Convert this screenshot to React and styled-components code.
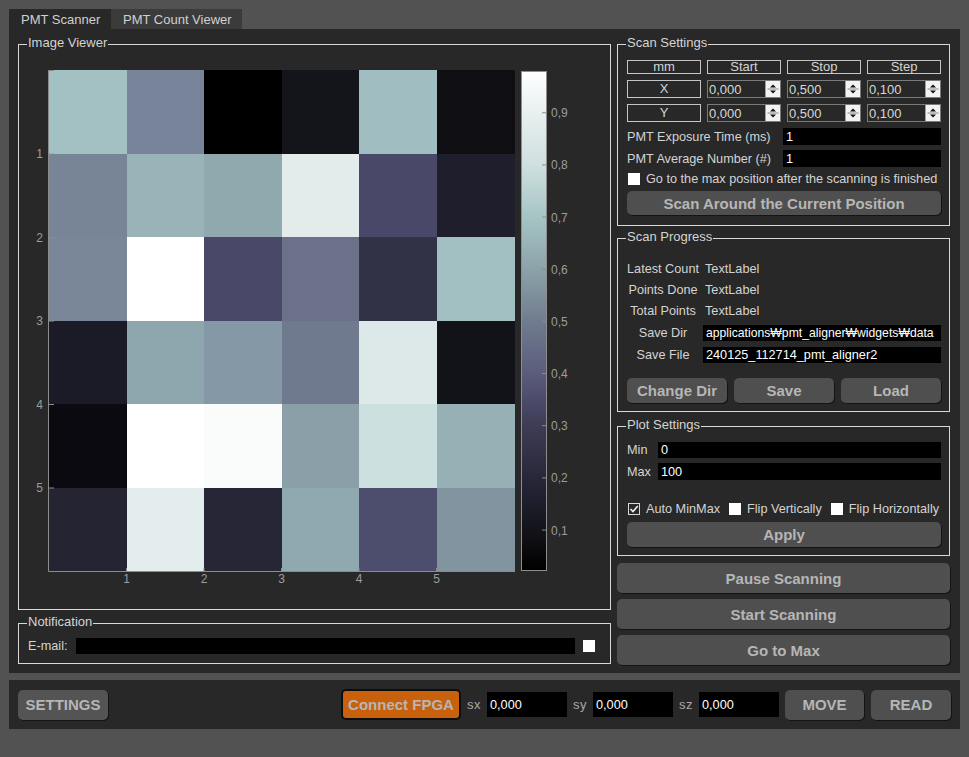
import React from 'react';
import styled, { createGlobalStyle } from 'styled-components';

const GlobalStyle = createGlobalStyle`
  html, body { margin: 0; padding: 0; background: #525252; }
  body { font-family: "Liberation Sans", Arial, sans-serif; font-size: 12.7px; color: #d4d4d4; }
  * { box-sizing: border-box; }
`;

const Window = styled.div`
  width: 969px;
  height: 757px;
  padding: 9px 0 0 9px;
  display: flex;
  flex-direction: column;
`;

const TabBar = styled.div`
  display: flex;
  height: 20px;
`;

const Tab = styled.div`
  width: ${p => p.$w}px;
  height: 20px;
  padding-left: 12px;
  display: flex;
  align-items: center;
  background: ${p => (p.$active ? '#282828' : '#3b3b3b')};
  color: #d0d0d0;
  font-size: 13px;
`;

const MainPanel = styled.div`
  width: 951px;
  height: 644px;
  background: #282828;
  padding: 15px 10px 0 9px;
  display: flex;
  gap: 6px;
`;

const Column = styled.div`
  width: ${p => p.$w}px;
  display: flex;
  flex-direction: column;
`;

const Group = styled.div`
  position: relative;
  border: 1px solid #d8d8d8;
  height: ${p => p.$h}px;
  margin-top: ${p => p.$mt || 0}px;
  padding: ${p => p.$pad || '0'};
  display: flex;
  flex-direction: column;
  flex: none;
`;

const GroupTitle = styled.span`
  position: absolute;
  top: -9px;
  left: 8px;
  padding: 0 1px;
  background: #282828;
  font-size: 13px;
  line-height: 13px;
  color: #d4d4d4;
  white-space: nowrap;
`;

const PlotSvg = styled.svg`
  display: block;
  font-family: "Liberation Sans", Arial, sans-serif;
`;

const SettingsGrid = styled.div`
  display: grid;
  grid-template-columns: repeat(4, 74px);
  grid-template-rows: 14px 18px 18px;
  column-gap: 6px;
  row-gap: 6px;
`;

const HeaderCell = styled.div`
  border: 1px solid #c4c4c4;
  display: flex;
  align-items: center;
  justify-content: center;
  font-size: 13px;
  line-height: 12px;
  color: #d4d4d4;
`;

const SpinBox = styled.div`
  border: 1px solid #7a7a7a;
  display: flex;
  align-items: center;
  justify-content: space-between;
  padding-left: 1px;
  color: #d8d8d8;
  font-size: 13px;
`;

const SpinButtons = styled.div`
  width: 15px;
  height: 16px;
  background: #f2f2f2;
  border-left: 1px solid #a0a0a0;
  display: flex;
`;

const FormRow = styled.div`
  display: flex;
  align-items: center;
  flex: none;
  height: ${p => p.$h || 17}px;
  margin-top: ${p => p.$mt || 0}px;
  gap: ${p => p.$gap || 0}px;
`;

const RowLabel = styled.span`
  width: ${p => (p.$w ? `${p.$w}px` : 'auto')};
  flex: ${p => (p.$w ? 'none' : '1')};
  text-align: ${p => (p.$center ? 'center' : 'left')};
  white-space: nowrap;
  color: #d4d4d4;
`;

const DarkInput = styled.div`
  width: ${p => (p.$w ? `${p.$w}px` : 'auto')};
  flex: ${p => (p.$w ? 'none' : '1')};
  height: ${p => p.$h || 16}px;
  background: #000;
  color: #fff;
  padding-left: 3px;
  display: flex;
  align-items: center;
  font-size: ${p => p.$fs || 12.7}px;
  white-space: nowrap;
  overflow: hidden;
`;

const ValueText = styled.span`
  padding-left: 2px;
  color: #d4d4d4;
`;

const CheckRow = styled.div`
  display: flex;
  align-items: center;
  flex: none;
  height: 14px;
  margin-top: ${p => p.$mt || 0}px;
  gap: 9px;
  padding-left: 1px;
`;

const CheckItem = styled.label`
  display: flex;
  align-items: center;
  gap: 6px;
  white-space: nowrap;
  color: #d4d4d4;
`;

const Box = styled.span`
  width: 12px;
  height: 12px;
  flex: none;
  background: ${p => (p.$checked ? '#282828' : '#ffffff')};
  border: ${p => (p.$checked ? '1px solid #d8d8d8' : 'none')};
  display: flex;
  align-items: center;
  justify-content: center;
`;

const Button = styled.div`
  height: ${p => p.$h || 25}px;
  width: ${p => (p.$w ? `${p.$w}px` : 'auto')};
  flex: ${p => (p.$grow ? '1' : 'none')};
  margin-top: ${p => p.$mt || 0}px;
  background: ${p => (p.$orange ? '#c8600c' : p.$light ? '#545454' : '#4f4f4f')};
  border: ${p => (p.$orange ? '2px solid #0c0c0c' : 'none')};
  border-radius: 5px;
  box-shadow: ${p => (p.$orange ? 'none' : '1px 1px 0 #141414')};
  color: #b6b6b6;
  font-weight: bold;
  font-size: 15px;
  display: flex;
  align-items: center;
  justify-content: center;
  white-space: nowrap;
`;

const ButtonRow = styled.div`
  display: flex;
  flex: none;
  gap: 7px;
  margin-top: ${p => p.$mt || 0}px;
`;

const BottomBar = styled.div`
  width: 951px;
  height: 49px;
  margin-top: 7px;
  background: #282828;
  padding: 0 9px 0 9px;
  display: flex;
  align-items: center;
  gap: 6px;
`;

const Spacer = styled.div`
  flex: 1;
`;

const CoordLabel = styled.span`
  width: 14px;
  color: #a8a8a8;
  font-size: 13px;
  letter-spacing: 0.5px;
`;

const CELLS = [
  ['#a3c1c3', '#77849a', '#000000', '#14151b', '#a0bec1', '#0e0e13'],
  ['#778597', '#9ab3b8', '#8fa9af', '#e3ebeb', '#4a4868', '#1f1e2c'],
  ['#7a8798', '#ffffff', '#4a4868', '#6b7189', '#323247', '#a2c0c1'],
  ['#1b1b27', '#8ea6ae', '#8499a5', '#6f7a8f', '#dde9e9', '#121318'],
  ['#0a0a10', '#ffffff', '#fafcfc', '#8a9fa8', '#cde0e0', '#97b0b5'],
  ['#242433', '#e4edee', '#262636', '#90a9b0', '#4d4d6d', '#8294a0'],
];

const STOPS = [
  [0, '#ffffff'],
  [0.084, '#e8efef'],
  [0.188, '#cfdfdf'],
  [0.293, '#a6c4c4'],
  [0.397, '#8ba2a9'],
  [0.502, '#707b8e'],
  [0.606, '#5b5c7b'],
  [0.66, '#4b4a6a'],
  [0.711, '#3d3c54'],
  [0.815, '#28273a'],
  [0.92, '#131319'],
  [1, '#000000'],
];

const PX = 30;
const PY = 25;
const CW = 77.5;
const RH = 83.5;
const AXIS = '#8c8c8c';
const LABEL = '#9c9c9c';

function Heatmap() {
  const right = PX + CW * 6;
  const bottom = PY + RH * 6;
  return (
    <PlotSvg width="591" height="564" viewBox="0 0 591 564">
      <defs>
        <linearGradient id="cbar" x1="0" y1="0" x2="0" y2="1">
          {STOPS.map(([o, c]) => (
            <stop key={o} offset={o} stopColor={c} />
          ))}
        </linearGradient>
      </defs>
      {CELLS.map((row, r) =>
        row.map((c, i) => (
          <rect
            key={`${r}-${i}`}
            x={PX + i * CW}
            y={PY + r * RH}
            width={CW + 0.6}
            height={RH + 0.6}
            fill={c}
            shapeRendering="crispEdges"
          />
        ))
      )}
      <line x1={PX - 0.5} y1={PY} x2={PX - 0.5} y2={bottom + 0.5} stroke={AXIS} strokeWidth="1" />
      <line x1={PX - 0.5} y1={bottom + 0.5} x2={right + 0.5} y2={bottom + 0.5} stroke={AXIS} strokeWidth="1" />
      {[0, 1, 2, 3, 4, 5].map(k => (
        <line key={`yt${k}`} x1={PX} y1={PY + k * RH + 0.5} x2={PX + 5} y2={PY + k * RH + 0.5} stroke={AXIS} />
      ))}
      {[1, 2, 3, 4, 5, 6].map(k => (
        <line key={`xt${k}`} x1={PX + k * CW} y1={bottom} x2={PX + k * CW} y2={bottom - 3} stroke={AXIS} />
      ))}
      {[1, 2, 3, 4, 5].map(k => (
        <text key={`yl${k}`} x={PX - 6} y={PY + k * RH + 4.5} fill={LABEL} fontSize="12" textAnchor="end">
          {k}
        </text>
      ))}
      {[1, 2, 3, 4, 5].map(k => (
        <text key={`xl${k}`} x={PX + k * CW} y={bottom + 12} fill={LABEL} fontSize="12" textAnchor="middle">
          {k}
        </text>
      ))}
      <rect x="502.5" y="26.5" width="25" height="499" fill="url(#cbar)" stroke="#8e8e8e" strokeWidth="1" />
      {[1, 2, 3, 4, 5, 6, 7, 8, 9].map(k => {
        const y = 537.2 - 52.16 * k;
        return (
          <g key={`cb${k}`}>
            <line x1="523" y1={y} x2="527.5" y2={y} stroke="#8e8e8e" />
            <text x="532" y={y + 4.5} fill={LABEL} fontSize="12">
              {`0,${k}`}
            </text>
          </g>
        );
      })}
    </PlotSvg>
  );
}

function SpinArrows() {
  return (
    <SpinButtons>
      <svg width="14" height="16" viewBox="0 0 14 16">
        <path d="M4 6.5 L7 3.5 L10 6.5 Z" fill="#111" />
        <line x1="1.5" y1="8" x2="12.5" y2="8" stroke="#8a8a8a" strokeWidth="1" />
        <path d="M4 9.5 L7 12.5 L10 9.5 Z" fill="#111" />
      </svg>
    </SpinButtons>
  );
}

function Spin({ value }) {
  return (
    <SpinBox>
      <span>{value}</span>
      <SpinArrows />
    </SpinBox>
  );
}

function Check({ checked, children }) {
  return (
    <CheckItem>
      <Box $checked={checked}>
        {checked && (
          <svg width="10" height="10" viewBox="0 0 10 10">
            <path d="M1.5 5 L4 7.5 L8.8 2" fill="none" stroke="#f0f0f0" strokeWidth="1.6" />
          </svg>
        )}
      </Box>
      {children}
    </CheckItem>
  );
}

export default function App() {
  return (
    <>
      <GlobalStyle />
      <Window>
        <TabBar>
          <Tab $active $w={102}>PMT Scanner</Tab>
          <Tab $w={131}>PMT Count Viewer</Tab>
        </TabBar>
        <MainPanel>
          <Column $w={593}>
            <Group $h={566}>
              <GroupTitle>Image Viewer</GroupTitle>
              <Heatmap />
            </Group>
            <Group $h={41} $mt={13} $pad="14px 15px 0 9px">
              <GroupTitle>Notification</GroupTitle>
              <FormRow $h={16} $gap={8}>
                <RowLabel $w={40}>E-mail:</RowLabel>
                <DarkInput />
                <Box />
              </FormRow>
            </Group>
          </Column>
          <Column $w={333}>
            <Group $h={182} $pad="15px 8px 0 9px">
              <GroupTitle>Scan Settings</GroupTitle>
              <SettingsGrid>
                <HeaderCell>mm</HeaderCell>
                <HeaderCell>Start</HeaderCell>
                <HeaderCell>Stop</HeaderCell>
                <HeaderCell>Step</HeaderCell>
                <HeaderCell>X</HeaderCell>
                <Spin value="0,000" />
                <Spin value="0,500" />
                <Spin value="0,100" />
                <HeaderCell>Y</HeaderCell>
                <Spin value="0,000" />
                <Spin value="0,500" />
                <Spin value="0,100" />
              </SettingsGrid>
              <FormRow $mt={6}>
                <RowLabel $w={156}>PMT Exposure Time (ms)</RowLabel>
                <DarkInput $h={17}>1</DarkInput>
              </FormRow>
              <FormRow $mt={5}>
                <RowLabel $w={156}>PMT Average Number (#)</RowLabel>
                <DarkInput $h={17}>1</DarkInput>
              </FormRow>
              <CheckRow $mt={5}>
                <Check>Go to the max position after the scanning is finished</Check>
              </CheckRow>
              <Button $h={24} $mt={5}>Scan Around the Current Position</Button>
            </Group>
            <Group $h={174} $mt={12} $pad="22px 8px 0 9px">
              <GroupTitle>Scan Progress</GroupTitle>
              <FormRow $h={16} $gap={4}>
                <RowLabel $w={72} $center>Latest Count</RowLabel>
                <ValueText>TextLabel</ValueText>
              </FormRow>
              <FormRow $h={16} $gap={4} $mt={5}>
                <RowLabel $w={72} $center>Points Done</RowLabel>
                <ValueText>TextLabel</ValueText>
              </FormRow>
              <FormRow $h={16} $gap={4} $mt={5}>
                <RowLabel $w={72} $center>Total Points</RowLabel>
                <ValueText>TextLabel</ValueText>
              </FormRow>
              <FormRow $h={16} $gap={4} $mt={6}>
                <RowLabel $w={72} $center>Save Dir</RowLabel>
                <DarkInput $fs={12.2}>applications₩pmt_aligner₩widgets₩data</DarkInput>
              </FormRow>
              <FormRow $h={16} $gap={4} $mt={6}>
                <RowLabel $w={72} $center>Save File</RowLabel>
                <DarkInput>240125_112714_pmt_aligner2</DarkInput>
              </FormRow>
              <ButtonRow $mt={15}>
                <Button $grow>Change Dir</Button>
                <Button $grow>Save</Button>
                <Button $grow>Load</Button>
              </ButtonRow>
            </Group>
            <Group $h={130} $mt={14} $pad="15px 8px 0 9px">
              <GroupTitle>Plot Settings</GroupTitle>
              <FormRow $h={16}>
                <RowLabel $w={31}>Min</RowLabel>
                <DarkInput>0</DarkInput>
              </FormRow>
              <FormRow $h={17} $mt={5}>
                <RowLabel $w={31}>Max</RowLabel>
                <DarkInput $h={17}>100</DarkInput>
              </FormRow>
              <CheckRow $mt={22}>
                <Check checked>Auto MinMax</Check>
                <Check>Flip Vertically</Check>
                <Check>Flip Horizontally</Check>
              </CheckRow>
              <Button $mt={6}>Apply</Button>
            </Group>
            <Button $h={30} $mt={7}>Pause Scanning</Button>
            <Button $h={30} $mt={6}>Start Scanning</Button>
            <Button $h={30} $mt={6}>Go to Max</Button>
          </Column>
        </MainPanel>
        <BottomBar>
          <Button $h={30} $w={90} $light>SETTINGS</Button>
          <Spacer />
          <Button $h={31} $w={120} $orange>Connect FPGA</Button>
          <CoordLabel>sx</CoordLabel>
          <DarkInput $w={80} $h={25}>0,000</DarkInput>
          <CoordLabel>sy</CoordLabel>
          <DarkInput $w={80} $h={25}>0,000</DarkInput>
          <CoordLabel>sz</CoordLabel>
          <DarkInput $w={80} $h={25}>0,000</DarkInput>
          <Button $h={30} $w={79}>MOVE</Button>
          <Button $h={30} $w={80} style={{ marginLeft: 1 }}>READ</Button>
        </BottomBar>
      </Window>
    </>
  );
}
